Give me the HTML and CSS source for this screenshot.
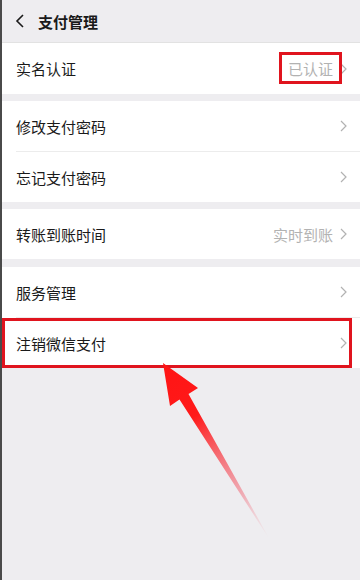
FILE: index.html
```html
<!DOCTYPE html>
<html lang="zh-CN">
<head>
<meta charset="utf-8">
<title>支付管理</title>
<link rel="stylesheet" href="styles.css">
</head>
<body>
<div class="page">
  <header class="nav">
    <svg class="back" width="10" height="14" viewBox="0 0 10 14"><path d="M8 1 L2 7 L8 13" fill="none" stroke="#1a1a1a" stroke-width="1.6"/></svg>
    <span class="title">支付管理</span>
  </header>

  <section class="group">
    <div class="row tall">
      <span class="label">实名认证</span>
      <span class="value boxed">已认证</span>
      <svg class="chev" width="7" height="12" viewBox="0 0 7 12"><path d="M1 1 L6 6 L1 11" fill="none" stroke="#b2b2b2" stroke-width="1.2"/></svg>
    </div>
  </section>

  <section class="group">
    <div class="row">
      <span class="label">修改支付密码</span>
      <svg class="chev" width="7" height="12" viewBox="0 0 7 12"><path d="M1 1 L6 6 L1 11" fill="none" stroke="#b2b2b2" stroke-width="1.2"/></svg>
    </div>
    <div class="sep"></div>
    <div class="row">
      <span class="label">忘记支付密码</span>
      <svg class="chev" width="7" height="12" viewBox="0 0 7 12"><path d="M1 1 L6 6 L1 11" fill="none" stroke="#b2b2b2" stroke-width="1.2"/></svg>
    </div>
  </section>

  <section class="group">
    <div class="row">
      <span class="label">转账到账时间</span>
      <span class="value">实时到账</span>
      <svg class="chev" width="7" height="12" viewBox="0 0 7 12"><path d="M1 1 L6 6 L1 11" fill="none" stroke="#b2b2b2" stroke-width="1.2"/></svg>
    </div>
  </section>

  <section class="group">
    <div class="row">
      <span class="label">服务管理</span>
      <svg class="chev" width="7" height="12" viewBox="0 0 7 12"><path d="M1 1 L6 6 L1 11" fill="none" stroke="#b2b2b2" stroke-width="1.2"/></svg>
    </div>
    <div class="sep"></div>
    <div class="row highlight">
      <span class="label">注销微信支付</span>
      <svg class="chev" width="7" height="12" viewBox="0 0 7 12"><path d="M1 1 L6 6 L1 11" fill="none" stroke="#b2b2b2" stroke-width="1.2"/></svg>
    </div>
  </section>

  <svg class="arrow" width="360" height="580" viewBox="0 0 360 580">
    <defs>
      <linearGradient id="fade" gradientUnits="userSpaceOnUse" x1="163" y1="363" x2="270" y2="540">
        <stop offset="0" stop-color="#ff1414" stop-opacity="1"/>
        <stop offset="0.3" stop-color="#ff1a1a" stop-opacity="1"/>
        <stop offset="0.75" stop-color="#f06070" stop-opacity="0.45"/>
        <stop offset="1" stop-color="#f4a0aa" stop-opacity="0"/>
      </linearGradient>
    </defs>
    <polygon points="163,363 198,388 188.5,394 270,540 179.5,399.5 170,406" fill="url(#fade)"/>
  </svg>
</div>
</body>
</html>
```

FILE: styles.css
```css
html, body {
  margin: 0;
  padding: 0;
}
body {
  width: 360px;
  height: 580px;
  overflow: hidden;
  background: #eeedf0;
  font-family: "Noto Sans CJK SC", "Noto Sans", sans-serif;
  color: #1a1a1a;
}
.page {
  position: relative;
  width: 360px;
  height: 580px;
  box-sizing: border-box;
  border-left: 2px solid #4a4a4a;
  background: #eeedf0;
}
.nav {
  height: 43px;
  display: flex;
  align-items: center;
  padding-left: 13px;
  box-sizing: border-box;
  border-bottom: 1px solid #e2e2e2;
}
.back {
  display: block;
  margin-right: 13px;
}
.title {
  font-size: 15px;
  font-weight: 700;
  line-height: 1;
}
.group {
  background: #fff;
  margin-bottom: 7px;
}
.group:nth-of-type(3) {
  margin-bottom: 8px;
}
.row {
  height: 50px;
  display: flex;
  align-items: center;
  padding: 0 13px 0 14px;
}
.row.tall {
  height: 51px;
}
.label {
  font-size: 15px;
  flex: 1;
  line-height: 1;
}
.value {
  font-size: 15px;
  color: #b2b2b2;
  margin-right: 7px;
  line-height: 1;
}
.value.boxed {
  position: relative;
  margin-right: 7px;
}
.value.boxed::after {
  content: "";
  position: absolute;
  left: -9px;
  right: -9px;
  top: -9px;
  bottom: -8px;
  border: 3px solid #e0141e;
}
.chev {
  display: block;
}
.sep {
  height: 1px;
  background: #ececec;
  margin-left: 14px;
}
.highlight {
  position: relative;
}
.highlight::after {
  content: "";
  position: absolute;
  left: 0;
  top: 0;
  width: 350px;
  height: 50px;
  border: 3px solid #e0141e;
  box-sizing: border-box;
}
.arrow {
  position: absolute;
  left: -2px;
  top: 0;
  pointer-events: none;
}
```
